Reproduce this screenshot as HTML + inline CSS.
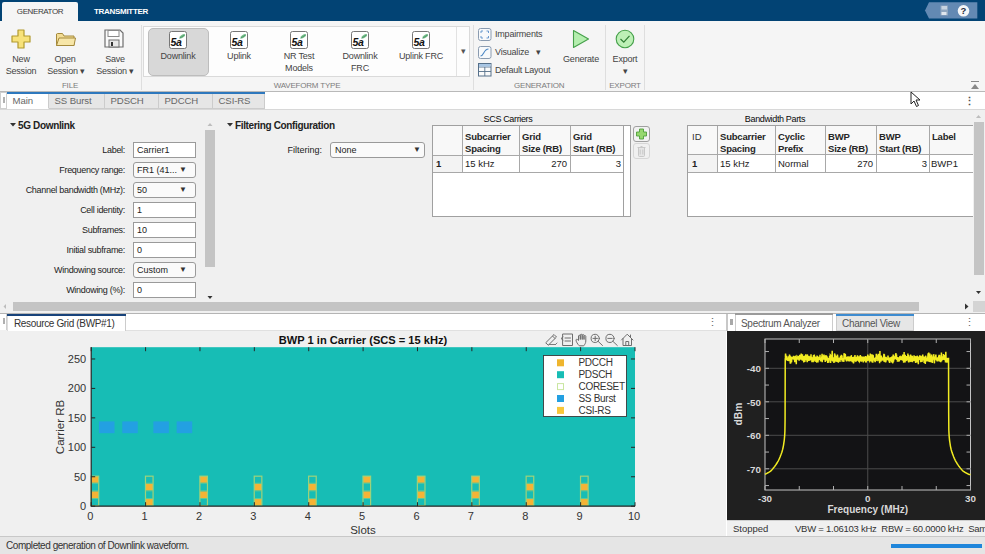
<!DOCTYPE html><html><head><meta charset="utf-8"><style>
html,body{margin:0;padding:0;width:985px;height:554px;overflow:hidden;background:#f0f0f0;position:relative}
body{font-family:"Liberation Sans",sans-serif}
.t{position:absolute;white-space:nowrap;line-height:1;font-family:"Liberation Sans",sans-serif}
</style></head><body>
<div style="position:absolute;left:0px;top:0px;width:985px;height:21px;background:#024374"></div>
<div style="position:absolute;left:2px;top:2px;width:76px;height:20px;background:#f5f5f5;border-radius:2px 2px 0 0"></div>
<div class="t" style="left:2px;top:8px;width:76px;text-align:center;font-size:8px;color:#3a3a3a;letter-spacing:-0.4px">GENERATOR</div>
<div class="t" style="left:80px;top:8px;width:82px;text-align:center;font-size:8px;color:#fff;letter-spacing:-0.3px;font-weight:bold">TRANSMITTER</div>
<svg style="position:absolute;left:920px;top:0px" width="65" height="21"><path d="M5 10.5 L9 2.3 L57.3 2.3 L57.3 18.6 L9 18.6 Z" fill="#6389b3"/><rect x="20.5" y="5.5" width="7.5" height="10" fill="#8fa6bf"/><rect x="21.5" y="6" width="5.5" height="3.5" fill="#c7d3e0"/><rect x="21.5" y="12" width="5" height="3" fill="#dfe6ee"/><circle cx="43.5" cy="10.8" r="5.8" fill="#f4f6f8"/><text x="43.5" y="14.3" font-size="9.5" font-weight="bold" text-anchor="middle" fill="#1d2a3a" font-family="Liberation Sans">?</text></svg>
<div style="position:absolute;left:0px;top:21px;width:985px;height:70px;background:#f5f5f5"></div>
<div style="position:absolute;left:0px;top:91px;width:985px;height:1px;background:#b9b9b9"></div>
<div style="position:absolute;left:141px;top:25px;width:1px;height:65px;background:#dedede"></div>
<div style="position:absolute;left:473px;top:25px;width:1px;height:65px;background:#dedede"></div>
<div style="position:absolute;left:605px;top:25px;width:1px;height:65px;background:#dedede"></div>
<div style="position:absolute;left:644px;top:25px;width:1px;height:65px;background:#dedede"></div>
<svg style="position:absolute;left:11px;top:29px" width="21" height="21"><path d="M7 1 H13 V7 H19 V13 H13 V19 H7 V13 H1 V7 H7 Z" fill="#f7e27a" stroke="#b19a2e" stroke-width="1.2" stroke-linejoin="round"/></svg>
<div class="t" style="left:0px;top:55px;width:42px;text-align:center;font-size:9px;color:#444;letter-spacing:-0.2px">New</div>
<div class="t" style="left:0px;top:67px;width:42px;text-align:center;font-size:9px;color:#444;letter-spacing:-0.2px">Session</div>
<svg style="position:absolute;left:55px;top:31px" width="22" height="17"><path d="M1.5 3 L1.5 14.5 L19 14.5 L19 5 L9 5 L7.5 2.5 L2.5 2.5 Z" fill="#f3dd95" stroke="#a58a3c" stroke-width="1"/><path d="M1.5 14.5 L4 7 L20.5 7 L19 14.5 Z" fill="#f7e6a8" stroke="#a58a3c" stroke-width="1"/></svg>
<div class="t" style="left:44px;top:55px;width:42px;text-align:center;font-size:9px;color:#444;letter-spacing:-0.2px">Open</div>
<div class="t" style="left:45px;top:67px;width:42px;text-align:center;font-size:9px;color:#444;letter-spacing:-0.2px">Session &#9662;</div>
<svg style="position:absolute;left:104px;top:29px" width="20" height="19"><path d="M1 1 H16 L19 4 V18 H1 Z" fill="#fafafa" stroke="#6e6e6e" stroke-width="1.2"/><rect x="4" y="1.5" width="11" height="6" fill="#fff" stroke="#8a8a8a" stroke-width="1"/><rect x="5" y="11" width="10" height="7" fill="#e8e8e8" stroke="#6e6e6e" stroke-width="1"/><rect x="7" y="13" width="2" height="4" fill="#333"/></svg>
<div class="t" style="left:94px;top:55px;width:42px;text-align:center;font-size:9px;color:#444;letter-spacing:-0.2px">Save</div>
<div class="t" style="left:94px;top:67px;width:42px;text-align:center;font-size:9px;color:#444;letter-spacing:-0.2px">Session &#9662;</div>
<div class="t" style="left:50px;top:82px;width:40px;text-align:center;font-size:8px;color:#7c7c7c;letter-spacing:-0.2px">FILE</div>
<div style="position:absolute;left:143px;top:26px;width:327px;height:51px;background:#fdfdfd;border:1px solid #dadada;box-sizing:border-box"></div>
<div style="position:absolute;left:456px;top:27px;width:1px;height:49px;background:#e2e2e2"></div>
<div class="t" style="left:457px;top:47px;width:13px;text-align:center;font-size:9px;color:#555">&#9662;</div>
<div style="position:absolute;left:148px;top:28px;width:61px;height:48px;background:#d8d8d8;border:1px solid #bdbdbd;border-radius:5px;box-sizing:border-box"></div>
<svg style="position:absolute;left:169px;top:31px" width="18" height="18"><rect x="0.5" y="0.5" width="17" height="17" rx="2" fill="#fff" stroke="#777" stroke-width="1"/><text x="1.6" y="14.6" font-size="10.5" font-weight="bold" font-style="italic" fill="#111" letter-spacing="-0.4" font-family="Liberation Sans">5a</text><ellipse cx="13.3" cy="5.3" rx="3.2" ry="1.5" transform="rotate(-30 13.3 5.3)" fill="#7cc08f"/><path d="M10.5 7.3 L15.5 4" stroke="#2e7d4f" stroke-width="0.6"/></svg>
<div class="t" style="left:148px;top:51.5px;width:60px;text-align:center;font-size:9px;color:#444;letter-spacing:-0.2px">Downlink</div>
<svg style="position:absolute;left:230px;top:31px" width="18" height="18"><rect x="0.5" y="0.5" width="17" height="17" rx="2" fill="#fff" stroke="#777" stroke-width="1"/><text x="1.6" y="14.6" font-size="10.5" font-weight="bold" font-style="italic" fill="#111" letter-spacing="-0.4" font-family="Liberation Sans">5a</text><ellipse cx="13.3" cy="5.3" rx="3.2" ry="1.5" transform="rotate(-30 13.3 5.3)" fill="#7cc08f"/><path d="M10.5 7.3 L15.5 4" stroke="#2e7d4f" stroke-width="0.6"/></svg>
<div class="t" style="left:209px;top:51.5px;width:60px;text-align:center;font-size:9px;color:#444;letter-spacing:-0.2px">Uplink</div>
<svg style="position:absolute;left:290px;top:31px" width="18" height="18"><rect x="0.5" y="0.5" width="17" height="17" rx="2" fill="#fff" stroke="#777" stroke-width="1"/><text x="1.6" y="14.6" font-size="10.5" font-weight="bold" font-style="italic" fill="#111" letter-spacing="-0.4" font-family="Liberation Sans">5a</text><ellipse cx="13.3" cy="5.3" rx="3.2" ry="1.5" transform="rotate(-30 13.3 5.3)" fill="#7cc08f"/><path d="M10.5 7.3 L15.5 4" stroke="#2e7d4f" stroke-width="0.6"/></svg>
<div class="t" style="left:269px;top:51.5px;width:60px;text-align:center;font-size:9px;color:#444;letter-spacing:-0.2px">NR Test</div>
<div class="t" style="left:269px;top:63.5px;width:60px;text-align:center;font-size:9px;color:#444;letter-spacing:-0.2px">Models</div>
<svg style="position:absolute;left:351px;top:31px" width="18" height="18"><rect x="0.5" y="0.5" width="17" height="17" rx="2" fill="#fff" stroke="#777" stroke-width="1"/><text x="1.6" y="14.6" font-size="10.5" font-weight="bold" font-style="italic" fill="#111" letter-spacing="-0.4" font-family="Liberation Sans">5a</text><ellipse cx="13.3" cy="5.3" rx="3.2" ry="1.5" transform="rotate(-30 13.3 5.3)" fill="#7cc08f"/><path d="M10.5 7.3 L15.5 4" stroke="#2e7d4f" stroke-width="0.6"/></svg>
<div class="t" style="left:330px;top:51.5px;width:60px;text-align:center;font-size:9px;color:#444;letter-spacing:-0.2px">Downlink</div>
<div class="t" style="left:330px;top:63.5px;width:60px;text-align:center;font-size:9px;color:#444;letter-spacing:-0.2px">FRC</div>
<svg style="position:absolute;left:412px;top:31px" width="18" height="18"><rect x="0.5" y="0.5" width="17" height="17" rx="2" fill="#fff" stroke="#777" stroke-width="1"/><text x="1.6" y="14.6" font-size="10.5" font-weight="bold" font-style="italic" fill="#111" letter-spacing="-0.4" font-family="Liberation Sans">5a</text><ellipse cx="13.3" cy="5.3" rx="3.2" ry="1.5" transform="rotate(-30 13.3 5.3)" fill="#7cc08f"/><path d="M10.5 7.3 L15.5 4" stroke="#2e7d4f" stroke-width="0.6"/></svg>
<div class="t" style="left:391px;top:51.5px;width:60px;text-align:center;font-size:9px;color:#444;letter-spacing:-0.2px">Uplink FRC</div>
<div class="t" style="left:257px;top:82px;width:100px;text-align:center;font-size:8px;color:#7c7c7c;letter-spacing:-0.2px">WAVEFORM TYPE</div>
<svg style="position:absolute;left:478px;top:28px" width="14" height="13"><rect x="0.5" y="0.5" width="12.5" height="12" rx="2" fill="#f7f9fb" stroke="#8a9bb0"/><path d="M3 5 V3 H5 M8.5 3 H10.5 V5 M10.5 8 V10 H8.5 M5 10 H3 V8" fill="none" stroke="#5a8fc8" stroke-width="0.9"/></svg>
<div class="t" style="left:495px;top:30px;font-size:9px;color:#444;letter-spacing:-0.2px">Impairments</div>
<svg style="position:absolute;left:478px;top:46px" width="14" height="13"><rect x="0.5" y="0.5" width="12.5" height="12" rx="2" fill="#f7f9fb" stroke="#8a9bb0"/><path d="M2.5 10 C6 10 5.5 3 10.5 3" fill="none" stroke="#4a86c4" stroke-width="1.1"/></svg>
<div class="t" style="left:495px;top:48px;font-size:9px;color:#444;letter-spacing:-0.2px">Visualize &nbsp;&nbsp;&#9662;</div>
<svg style="position:absolute;left:478px;top:63px" width="14" height="14"><rect x="0.5" y="0.5" width="12.5" height="12.5" fill="#fbfbfb" stroke="#56708a"/><path d="M0.5 4 H13 M6.8 4 V13 M0.5 8.5 H13" stroke="#56708a" stroke-width="0.9"/><rect x="1" y="1" width="11.5" height="2.6" fill="#a8c6e4"/></svg>
<div class="t" style="left:495px;top:66px;font-size:9px;color:#444;letter-spacing:-0.2px">Default Layout</div>
<svg style="position:absolute;left:572px;top:29px" width="18" height="20"><path d="M1.5 1.5 L16.5 10 L1.5 18.5 Z" fill="#b4eeae" stroke="#45a04a" stroke-width="1.1" stroke-linejoin="round"/></svg>
<div class="t" style="left:550px;top:55px;width:62px;text-align:center;font-size:9px;color:#444;letter-spacing:-0.2px">Generate</div>
<div class="t" style="left:514px;top:82px;width:50px;text-align:center;font-size:8px;color:#7c7c7c;letter-spacing:-0.2px">GENERATION</div>
<svg style="position:absolute;left:615px;top:29px" width="20" height="20"><circle cx="10" cy="10" r="8.8" fill="#bdf0b6" stroke="#45a04a" stroke-width="1.1"/><path d="M5.5 10 L8.8 13.2 L14.5 6.8" fill="none" stroke="#2f7d34" stroke-width="1.2"/></svg>
<div class="t" style="left:595px;top:55px;width:60px;text-align:center;font-size:9px;color:#444;letter-spacing:-0.2px">Export</div>
<div class="t" style="left:595px;top:67px;width:60px;text-align:center;font-size:9px;color:#444;letter-spacing:-0.2px">&#9662;</div>
<div class="t" style="left:600px;top:82px;width:50px;text-align:center;font-size:8px;color:#7c7c7c;letter-spacing:-0.2px">EXPORT</div>
<svg style="position:absolute;left:970px;top:80px" width="10" height="10"><rect x="1" y="1" width="8" height="1" fill="#888"/><path d="M1 9 L5 4 L9 9 Z" fill="#888"/></svg>
<div style="position:absolute;left:0px;top:92px;width:985px;height:18px;background:#fff"></div>
<div style="position:absolute;left:0px;top:109px;width:985px;height:1px;background:#d8d8d8"></div>
<div style="position:absolute;left:0px;top:92px;width:7px;height:17px;background:#fff;border:1px solid #cfcfcf;box-sizing:border-box"></div>
<div style="position:absolute;left:3px;top:97px;width:2px;height:6px;background:#b0b0b0"></div>
<div style="position:absolute;left:7px;top:92px;width:42px;height:17px;background:#ffffff;border-right:1px solid #cccccc;border-bottom:1px solid #fff;box-sizing:border-box"></div>
<div style="position:absolute;left:7px;top:92px;width:42px;height:2px;background:#2e78bd"></div>
<div class="t" style="left:12.5px;top:96.2px;font-size:9.6px;color:#666;letter-spacing:-0.1px">Main</div>
<div style="position:absolute;left:49px;top:92px;width:56px;height:17px;background:#e6e6e6;border-right:1px solid #cccccc;border-bottom:1px solid #cccccc;box-sizing:border-box"></div>
<div style="position:absolute;left:49px;top:92px;width:56px;height:2px;background:#2e78bd"></div>
<div class="t" style="left:54.5px;top:96.2px;font-size:9.6px;color:#666;letter-spacing:-0.1px">SS Burst</div>
<div style="position:absolute;left:105px;top:92px;width:54px;height:17px;background:#e6e6e6;border-right:1px solid #cccccc;border-bottom:1px solid #cccccc;box-sizing:border-box"></div>
<div style="position:absolute;left:105px;top:92px;width:54px;height:2px;background:#2e78bd"></div>
<div class="t" style="left:110.5px;top:96.2px;font-size:9.6px;color:#666;letter-spacing:-0.1px">PDSCH</div>
<div style="position:absolute;left:159px;top:92px;width:54px;height:17px;background:#e6e6e6;border-right:1px solid #cccccc;border-bottom:1px solid #cccccc;box-sizing:border-box"></div>
<div style="position:absolute;left:159px;top:92px;width:54px;height:2px;background:#2e78bd"></div>
<div class="t" style="left:164.5px;top:96.2px;font-size:9.6px;color:#666;letter-spacing:-0.1px">PDCCH</div>
<div style="position:absolute;left:213px;top:92px;width:52px;height:17px;background:#e6e6e6;border-right:1px solid #cccccc;border-bottom:1px solid #cccccc;box-sizing:border-box"></div>
<div style="position:absolute;left:213px;top:92px;width:52px;height:2px;background:#2e78bd"></div>
<div class="t" style="left:218.5px;top:96.2px;font-size:9.6px;color:#666;letter-spacing:-0.1px">CSI-RS</div>
<div class="t" style="left:964px;top:96px;font-size:11px;color:#555;font-weight:bold">&#8942;</div>
<svg style="position:absolute;left:910px;top:91px" width="12" height="17"><path d="M1 1 L1 13 L4 10 L6.5 15.5 L8.5 14.5 L6 9 L10 9 Z" fill="#fff" stroke="#222" stroke-width="1"/></svg>
<div style="position:absolute;left:0px;top:110px;width:985px;height:203px;background:#f0f0f0"></div>
<svg style="position:absolute;left:10px;top:123px" width="6" height="4"><path d="M0 0 H6 L3 3.5 Z" fill="#333"/></svg>
<div class="t" style="left:18px;top:120.5px;font-size:10px;font-weight:bold;color:#222;letter-spacing:-0.35px">5G Downlink</div>
<div class="t" style="left:0px;top:146px;width:125px;text-align:right;font-size:9px;color:#222;letter-spacing:-0.3px">Label:</div>
<div style="position:absolute;left:133px;top:142px;width:63px;height:16px;background:#fff;border:1px solid #9a9a9a;box-sizing:border-box"></div>
<div class="t" style="left:137px;top:146px;font-size:9px;color:#222">Carrier1</div>
<div class="t" style="left:0px;top:166px;width:125px;text-align:right;font-size:9px;color:#222;letter-spacing:-0.3px">Frequency range:</div>
<div style="position:absolute;left:133px;top:162px;width:63px;height:16px;background:#fafafa;border:1px solid #9a9a9a;border-radius:3px;box-sizing:border-box"></div>
<div class="t" style="left:179px;top:166px;font-size:8px;color:#333">&#9660;</div>
<div class="t" style="left:137px;top:166px;font-size:9px;color:#222">FR1 (41...</div>
<div class="t" style="left:0px;top:186px;width:125px;text-align:right;font-size:9px;color:#222;letter-spacing:-0.3px">Channel bandwidth (MHz):</div>
<div style="position:absolute;left:133px;top:182px;width:63px;height:16px;background:#fafafa;border:1px solid #9a9a9a;border-radius:3px;box-sizing:border-box"></div>
<div class="t" style="left:179px;top:186px;font-size:8px;color:#333">&#9660;</div>
<div class="t" style="left:137px;top:186px;font-size:9px;color:#222">50</div>
<div class="t" style="left:0px;top:206px;width:125px;text-align:right;font-size:9px;color:#222;letter-spacing:-0.3px">Cell identity:</div>
<div style="position:absolute;left:133px;top:202px;width:63px;height:16px;background:#fff;border:1px solid #9a9a9a;box-sizing:border-box"></div>
<div class="t" style="left:137px;top:206px;font-size:9px;color:#222">1</div>
<div class="t" style="left:0px;top:226px;width:125px;text-align:right;font-size:9px;color:#222;letter-spacing:-0.3px">Subframes:</div>
<div style="position:absolute;left:133px;top:222px;width:63px;height:16px;background:#fff;border:1px solid #9a9a9a;box-sizing:border-box"></div>
<div class="t" style="left:137px;top:226px;font-size:9px;color:#222">10</div>
<div class="t" style="left:0px;top:246px;width:125px;text-align:right;font-size:9px;color:#222;letter-spacing:-0.3px">Initial subframe:</div>
<div style="position:absolute;left:133px;top:242px;width:63px;height:16px;background:#fff;border:1px solid #9a9a9a;box-sizing:border-box"></div>
<div class="t" style="left:137px;top:246px;font-size:9px;color:#222">0</div>
<div class="t" style="left:0px;top:266px;width:125px;text-align:right;font-size:9px;color:#222;letter-spacing:-0.3px">Windowing source:</div>
<div style="position:absolute;left:133px;top:262px;width:63px;height:16px;background:#fafafa;border:1px solid #9a9a9a;border-radius:3px;box-sizing:border-box"></div>
<div class="t" style="left:179px;top:266px;font-size:8px;color:#333">&#9660;</div>
<div class="t" style="left:137px;top:266px;font-size:9px;color:#222">Custom</div>
<div class="t" style="left:0px;top:286px;width:125px;text-align:right;font-size:9px;color:#222;letter-spacing:-0.3px">Windowing (%):</div>
<div style="position:absolute;left:133px;top:282px;width:63px;height:16px;background:#fff;border:1px solid #9a9a9a;box-sizing:border-box"></div>
<div class="t" style="left:137px;top:286px;font-size:9px;color:#222">0</div>
<div style="position:absolute;left:205px;top:118px;width:10px;height:184px;background:#f0f0f0"></div>
<svg style="position:absolute;left:205px;top:120px" width="10" height="8"><path d="M2.5 6 L5 3 L7.5 6 Z" fill="#bdbdbd"/></svg>
<div style="position:absolute;left:205px;top:130px;width:10px;height:137px;background:#c4c4c4"></div>
<svg style="position:absolute;left:205px;top:294px" width="10" height="8"><path d="M2.5 2 L5 5 L7.5 2 Z" fill="#333"/></svg>
<svg style="position:absolute;left:227px;top:123px" width="6" height="4"><path d="M0 0 H6 L3 3.5 Z" fill="#333"/></svg>
<div class="t" style="left:235px;top:120.5px;font-size:10px;font-weight:bold;color:#222;letter-spacing:-0.35px">Filtering Configuration</div>
<div class="t" style="left:230px;top:146px;width:92px;text-align:right;font-size:9px;color:#222">Filtering:</div>
<div style="position:absolute;left:330px;top:142px;width:95px;height:16px;background:#fafafa;border:1px solid #9a9a9a;border-radius:3px;box-sizing:border-box"></div>
<div class="t" style="left:335px;top:146px;font-size:9px;color:#222">None</div>
<div class="t" style="left:413px;top:146px;font-size:8px;color:#333">&#9660;</div>
<div class="t" style="left:458px;top:115px;width:100px;text-align:center;font-size:9px;color:#0a0a0a;letter-spacing:-0.35px">SCS Carriers</div>
<div style="position:absolute;left:432px;top:125px;width:199px;height:92px;background:#fff;border:1px solid #a0a0a0;box-sizing:border-box"></div>
<div style="position:absolute;left:623px;top:125px;width:1px;height:92px;background:#a0a0a0"></div>
<div style="position:absolute;left:433px;top:126px;width:190px;height:30px;background:#f8f8f8"></div>
<div style="position:absolute;left:433px;top:156px;width:29px;height:16px;background:#f3f3f3"></div>
<div style="position:absolute;left:462px;top:126px;width:1px;height:47px;background:#a8a8a8"></div>
<div style="position:absolute;left:519px;top:126px;width:1px;height:47px;background:#a8a8a8"></div>
<div style="position:absolute;left:570px;top:126px;width:1px;height:47px;background:#a8a8a8"></div>
<div style="position:absolute;left:433px;top:155px;width:190px;height:1px;background:#a8a8a8"></div>
<div style="position:absolute;left:433px;top:172px;width:190px;height:1px;background:#a8a8a8"></div>
<div class="t" style="left:465px;top:131px;font-size:9.5px;font-weight:bold;color:#262626;line-height:12px;letter-spacing:-0.2px">Subcarrier<br>Spacing</div>
<div class="t" style="left:522px;top:131px;font-size:9.5px;font-weight:bold;color:#262626;line-height:12px;letter-spacing:-0.2px">Grid<br>Size (RB)</div>
<div class="t" style="left:573px;top:131px;font-size:9.5px;font-weight:bold;color:#262626;line-height:12px;letter-spacing:-0.2px">Grid<br>Start (RB)</div>
<div class="t" style="left:436px;top:159px;font-size:9.5px;font-weight:bold;color:#222">1</div>
<div class="t" style="left:465px;top:159px;font-size:9.5px;color:#222">15 kHz</div>
<div class="t" style="left:519px;top:159px;width:48px;text-align:right;font-size:9.5px;color:#222">270</div>
<div class="t" style="left:570px;top:159px;width:51px;text-align:right;font-size:9.5px;color:#222">3</div>
<svg style="position:absolute;left:633px;top:126px" width="17" height="16"><rect x="0.5" y="0.5" width="16" height="15" rx="2.5" fill="#f2f2f2" stroke="#a0a0a0"/><path d="M6.5 3 H10.5 V6 H13.5 V10 H10.5 V13 H6.5 V10 H3.5 V6 H6.5 Z" fill="#96d86e" stroke="#4f9e3c" stroke-width="0.9" stroke-linejoin="round"/></svg>
<svg style="position:absolute;left:633px;top:143px" width="17" height="16"><rect x="0.5" y="0.5" width="16" height="15" rx="2.5" fill="#f0f0f0" stroke="#d6d6d6"/><path d="M4.5 4.5 H12.5 M5.5 4.5 V12.5 Q5.5 13.5 6.5 13.5 H10.5 Q11.5 13.5 11.5 12.5 V4.5 M7.5 3.5 H9.5 M7.2 6.5 V11.5 M9.8 6.5 V11.5" fill="#e6e6e6" stroke="#c4c4c4" stroke-width="0.9"/></svg>
<div class="t" style="left:688px;top:115px;width:174px;text-align:center;font-size:9px;color:#0a0a0a;letter-spacing:-0.35px">Bandwidth Parts</div>
<div style="position:absolute;left:687px;top:125px;width:290px;height:92px;background:#fff;border:1px solid #a0a0a0;box-sizing:border-box"></div>
<div style="position:absolute;left:688px;top:126px;width:289px;height:29px;background:#f8f8f8"></div>
<div style="position:absolute;left:688px;top:155px;width:29px;height:17px;background:#f3f3f3"></div>
<div style="position:absolute;left:717px;top:126px;width:1px;height:47px;background:#a8a8a8"></div>
<div style="position:absolute;left:775px;top:126px;width:1px;height:47px;background:#a8a8a8"></div>
<div style="position:absolute;left:825px;top:126px;width:1px;height:47px;background:#a8a8a8"></div>
<div style="position:absolute;left:876px;top:126px;width:1px;height:47px;background:#a8a8a8"></div>
<div style="position:absolute;left:929px;top:126px;width:1px;height:47px;background:#a8a8a8"></div>
<div style="position:absolute;left:688px;top:154px;width:289px;height:1px;background:#a8a8a8"></div>
<div style="position:absolute;left:688px;top:172px;width:289px;height:1px;background:#a8a8a8"></div>
<div class="t" style="left:692px;top:131px;font-size:9.5px;color:#333;line-height:12px">ID</div>
<div class="t" style="left:720px;top:131px;font-size:9.5px;font-weight:bold;color:#262626;line-height:12px;letter-spacing:-0.2px">Subcarrier<br>Spacing</div>
<div class="t" style="left:778px;top:131px;font-size:9.5px;font-weight:bold;color:#262626;line-height:12px;letter-spacing:-0.2px">Cyclic<br>Prefix</div>
<div class="t" style="left:828px;top:131px;font-size:9.5px;font-weight:bold;color:#262626;line-height:12px;letter-spacing:-0.2px">BWP<br>Size (RB)</div>
<div class="t" style="left:879px;top:131px;font-size:9.5px;font-weight:bold;color:#262626;line-height:12px;letter-spacing:-0.2px">BWP<br>Start (RB)</div>
<div class="t" style="left:932px;top:131px;font-size:9.5px;font-weight:bold;color:#262626;line-height:12px;letter-spacing:-0.2px">Label</div>
<div class="t" style="left:692px;top:159px;font-size:9.5px;font-weight:bold;color:#222">1</div>
<div class="t" style="left:720px;top:159px;font-size:9.5px;color:#222">15 kHz</div>
<div class="t" style="left:778px;top:159px;font-size:9.5px;color:#222">Normal</div>
<div class="t" style="left:825px;top:159px;width:48px;text-align:right;font-size:9.5px;color:#222">270</div>
<div class="t" style="left:876px;top:159px;width:51px;text-align:right;font-size:9.5px;color:#222">3</div>
<div class="t" style="left:931px;top:159px;font-size:9.5px;color:#222">BWP1</div>
<div style="position:absolute;left:973px;top:110px;width:12px;height:192px;background:#f0f0f0"></div>
<svg style="position:absolute;left:973px;top:112px" width="11" height="8"><path d="M3 6 L5.5 3 L8 6 Z" fill="#bdbdbd"/></svg>
<div style="position:absolute;left:974px;top:122px;width:10px;height:153px;background:#c4c4c4"></div>
<svg style="position:absolute;left:973px;top:289px" width="11" height="8"><path d="M3 2 L5.5 5 L8 2 Z" fill="#333"/></svg>
<div style="position:absolute;left:0px;top:301px;width:985px;height:11px;background:#f0f0f0"></div>
<svg style="position:absolute;left:0px;top:301px" width="10" height="11"><path d="M6 3 L3.5 5.5 L6 8 Z" fill="#bdbdbd"/></svg>
<div style="position:absolute;left:13px;top:302px;width:906px;height:9px;background:#c4c4c4"></div>
<svg style="position:absolute;left:962px;top:301px" width="10" height="11"><path d="M3 2.5 L6.5 5.5 L3 8.5 Z" fill="#333"/></svg>
<div style="position:absolute;left:973px;top:301px;width:12px;height:11px;background:#d4d4d4"></div>
<div style="position:absolute;left:0px;top:313px;width:985px;height:1px;background:#b4b4b4"></div>
<div style="position:absolute;left:0px;top:314px;width:985px;height:16px;background:#fff"></div>
<div style="position:absolute;left:0px;top:314px;width:7px;height:16px;background:#fff;border-right:1px solid #cfcfcf;box-sizing:border-box"></div>
<div style="position:absolute;left:3px;top:318px;width:2px;height:6px;background:#b0b0b0"></div>
<div style="position:absolute;left:7px;top:314px;width:119px;height:17px;background:#fff;border-right:1px solid #ccc;border-left:1px solid #ddd;box-sizing:border-box"></div>
<div style="position:absolute;left:7px;top:314px;width:119px;height:2px;background:#17427a"></div>
<div class="t" style="left:14px;top:319px;font-size:10px;color:#333;letter-spacing:-0.35px">Resource Grid (BWP#1)</div>
<div style="position:absolute;left:126px;top:330px;width:601px;height:1px;background:#e0e0e0"></div>
<div class="t" style="left:707px;top:317px;font-size:11px;color:#666">&#8942;</div>
<div style="position:absolute;left:727px;top:314px;width:258px;height:17px;background:#fff"></div>
<div style="position:absolute;left:726px;top:314px;width:2px;height:17px;background:#c8c8c8"></div>
<div style="position:absolute;left:730px;top:319px;width:3px;height:6px;background:#a8a8a8"></div>
<div style="position:absolute;left:735px;top:314px;width:98px;height:17px;background:#fff;border-right:1px solid #ccc;border-left:1px solid #ccc;box-sizing:border-box"></div>
<div style="position:absolute;left:735px;top:313px;width:98px;height:2px;background:#9a9a9a"></div>
<div class="t" style="left:741px;top:319px;font-size:10px;color:#555;letter-spacing:-0.3px">Spectrum Analyzer</div>
<div style="position:absolute;left:836px;top:315px;width:78px;height:16px;background:#e6e6e6;border:1px solid #ccc;box-sizing:border-box"></div>
<div style="position:absolute;left:836px;top:314px;width:78px;height:2px;background:#3d8bd0"></div>
<div class="t" style="left:842px;top:319px;font-size:10px;color:#555;letter-spacing:-0.3px">Channel View</div>
<div class="t" style="left:964px;top:317px;font-size:11px;color:#666">&#8942;</div>
<div style="position:absolute;left:0px;top:331px;width:727px;height:205px;background:#f0f0f0"></div>
<svg style="position:absolute;left:0;top:0" width="727" height="554">
<rect x="91.2" y="347.2" width="543.8" height="159.0" fill="#17bdb5"/>
<rect x="98.97" y="421.40" width="15.54" height="11.78" fill="#23a0e2"/>
<rect x="122.27" y="421.40" width="15.54" height="11.78" fill="#23a0e2"/>
<rect x="153.35" y="421.40" width="15.54" height="11.78" fill="#23a0e2"/>
<rect x="176.65" y="421.40" width="15.54" height="11.78" fill="#23a0e2"/>
<rect x="91.20" y="476.08" width="7.40" height="6.66" fill="#f5b335"/>
<rect x="91.20" y="491.39" width="7.40" height="6.66" fill="#f5b335"/>
<rect x="91.10" y="476.18" width="7.60" height="29.42" fill="none" stroke="#9fd27a" stroke-width="1.2"/>
<path d="M91.10 483.23 h7.60" stroke="#7fcf8a" stroke-width="0.7"/>
<path d="M91.10 490.89 h7.60" stroke="#7fcf8a" stroke-width="0.7"/>
<path d="M91.10 498.54 h7.60" stroke="#7fcf8a" stroke-width="0.7"/>
<rect x="145.58" y="483.73" width="7.40" height="6.66" fill="#f5b335"/>
<rect x="145.58" y="499.04" width="7.40" height="6.66" fill="#f5b335"/>
<rect x="145.48" y="476.18" width="7.60" height="29.42" fill="none" stroke="#9fd27a" stroke-width="1.2"/>
<path d="M145.48 483.23 h7.60" stroke="#7fcf8a" stroke-width="0.7"/>
<path d="M145.48 490.89 h7.60" stroke="#7fcf8a" stroke-width="0.7"/>
<path d="M145.48 498.54 h7.60" stroke="#7fcf8a" stroke-width="0.7"/>
<rect x="199.96" y="476.08" width="7.40" height="6.66" fill="#f5b335"/>
<rect x="199.96" y="491.39" width="7.40" height="6.66" fill="#f5b335"/>
<rect x="199.86" y="476.18" width="7.60" height="29.42" fill="none" stroke="#9fd27a" stroke-width="1.2"/>
<path d="M199.86 483.23 h7.60" stroke="#7fcf8a" stroke-width="0.7"/>
<path d="M199.86 490.89 h7.60" stroke="#7fcf8a" stroke-width="0.7"/>
<path d="M199.86 498.54 h7.60" stroke="#7fcf8a" stroke-width="0.7"/>
<rect x="254.34" y="483.73" width="7.40" height="6.66" fill="#f5b335"/>
<rect x="254.34" y="499.04" width="7.40" height="6.66" fill="#f5b335"/>
<rect x="254.24" y="476.18" width="7.60" height="29.42" fill="none" stroke="#9fd27a" stroke-width="1.2"/>
<path d="M254.24 483.23 h7.60" stroke="#7fcf8a" stroke-width="0.7"/>
<path d="M254.24 490.89 h7.60" stroke="#7fcf8a" stroke-width="0.7"/>
<path d="M254.24 498.54 h7.60" stroke="#7fcf8a" stroke-width="0.7"/>
<rect x="308.72" y="483.73" width="7.40" height="6.66" fill="#f5b335"/>
<rect x="308.72" y="499.04" width="7.40" height="6.66" fill="#f5b335"/>
<rect x="308.62" y="476.18" width="7.60" height="29.42" fill="none" stroke="#9fd27a" stroke-width="1.2"/>
<path d="M308.62 483.23 h7.60" stroke="#7fcf8a" stroke-width="0.7"/>
<path d="M308.62 490.89 h7.60" stroke="#7fcf8a" stroke-width="0.7"/>
<path d="M308.62 498.54 h7.60" stroke="#7fcf8a" stroke-width="0.7"/>
<rect x="363.10" y="476.08" width="7.40" height="6.66" fill="#f5b335"/>
<rect x="363.10" y="491.39" width="7.40" height="6.66" fill="#f5b335"/>
<rect x="363.00" y="476.18" width="7.60" height="29.42" fill="none" stroke="#9fd27a" stroke-width="1.2"/>
<path d="M363.00 483.23 h7.60" stroke="#7fcf8a" stroke-width="0.7"/>
<path d="M363.00 490.89 h7.60" stroke="#7fcf8a" stroke-width="0.7"/>
<path d="M363.00 498.54 h7.60" stroke="#7fcf8a" stroke-width="0.7"/>
<rect x="417.48" y="476.08" width="7.40" height="6.66" fill="#f5b335"/>
<rect x="417.48" y="491.39" width="7.40" height="6.66" fill="#f5b335"/>
<rect x="417.38" y="476.18" width="7.60" height="29.42" fill="none" stroke="#9fd27a" stroke-width="1.2"/>
<path d="M417.38 483.23 h7.60" stroke="#7fcf8a" stroke-width="0.7"/>
<path d="M417.38 490.89 h7.60" stroke="#7fcf8a" stroke-width="0.7"/>
<path d="M417.38 498.54 h7.60" stroke="#7fcf8a" stroke-width="0.7"/>
<rect x="471.86" y="476.08" width="7.40" height="6.66" fill="#f5b335"/>
<rect x="471.86" y="491.39" width="7.40" height="6.66" fill="#f5b335"/>
<rect x="471.76" y="476.18" width="7.60" height="29.42" fill="none" stroke="#9fd27a" stroke-width="1.2"/>
<path d="M471.76 483.23 h7.60" stroke="#7fcf8a" stroke-width="0.7"/>
<path d="M471.76 490.89 h7.60" stroke="#7fcf8a" stroke-width="0.7"/>
<path d="M471.76 498.54 h7.60" stroke="#7fcf8a" stroke-width="0.7"/>
<rect x="526.24" y="483.73" width="7.40" height="6.66" fill="#f5b335"/>
<rect x="526.24" y="499.04" width="7.40" height="6.66" fill="#f5b335"/>
<rect x="526.14" y="476.18" width="7.60" height="29.42" fill="none" stroke="#9fd27a" stroke-width="1.2"/>
<path d="M526.14 483.23 h7.60" stroke="#7fcf8a" stroke-width="0.7"/>
<path d="M526.14 490.89 h7.60" stroke="#7fcf8a" stroke-width="0.7"/>
<path d="M526.14 498.54 h7.60" stroke="#7fcf8a" stroke-width="0.7"/>
<rect x="580.62" y="483.73" width="7.40" height="6.66" fill="#f5b335"/>
<rect x="580.62" y="499.04" width="7.40" height="6.66" fill="#f5b335"/>
<rect x="580.52" y="476.18" width="7.60" height="29.42" fill="none" stroke="#9fd27a" stroke-width="1.2"/>
<path d="M580.52 483.23 h7.60" stroke="#7fcf8a" stroke-width="0.7"/>
<path d="M580.52 490.89 h7.60" stroke="#7fcf8a" stroke-width="0.7"/>
<path d="M580.52 498.54 h7.60" stroke="#7fcf8a" stroke-width="0.7"/>
<path d="M91.2 347.2 V506.2 H635.0" fill="none" stroke="#262626" stroke-width="1.2"/>
<path d="M91.20 506.2 v-4 M91.20 347.2 v4 M145.58 506.2 v-4 M145.58 347.2 v4 M199.96 506.2 v-4 M199.96 347.2 v4 M254.34 506.2 v-4 M254.34 347.2 v4 M308.72 506.2 v-4 M308.72 347.2 v4 M363.10 506.2 v-4 M363.10 347.2 v4 M417.48 506.2 v-4 M417.48 347.2 v4 M471.86 506.2 v-4 M471.86 347.2 v4 M526.24 506.2 v-4 M526.24 347.2 v4 M580.62 506.2 v-4 M580.62 347.2 v4 M635.00 506.2 v-4 M635.00 347.2 v4 M91.2 506.20 h4 M635.0 506.20 h-4 M91.2 476.76 h4 M635.0 476.76 h-4 M91.2 447.31 h4 M635.0 447.31 h-4 M91.2 417.87 h4 M635.0 417.87 h-4 M91.2 388.42 h4 M635.0 388.42 h-4 M91.2 358.98 h4 M635.0 358.98 h-4" stroke="#262626" stroke-width="1"/>
<text x="90.20" y="520.2" font-size="11" text-anchor="middle" fill="#333" font-family="Liberation Sans">0</text>
<text x="144.58" y="520.2" font-size="11" text-anchor="middle" fill="#333" font-family="Liberation Sans">1</text>
<text x="198.96" y="520.2" font-size="11" text-anchor="middle" fill="#333" font-family="Liberation Sans">2</text>
<text x="253.34" y="520.2" font-size="11" text-anchor="middle" fill="#333" font-family="Liberation Sans">3</text>
<text x="307.72" y="520.2" font-size="11" text-anchor="middle" fill="#333" font-family="Liberation Sans">4</text>
<text x="362.10" y="520.2" font-size="11" text-anchor="middle" fill="#333" font-family="Liberation Sans">5</text>
<text x="416.48" y="520.2" font-size="11" text-anchor="middle" fill="#333" font-family="Liberation Sans">6</text>
<text x="470.86" y="520.2" font-size="11" text-anchor="middle" fill="#333" font-family="Liberation Sans">7</text>
<text x="525.24" y="520.2" font-size="11" text-anchor="middle" fill="#333" font-family="Liberation Sans">8</text>
<text x="579.62" y="520.2" font-size="11" text-anchor="middle" fill="#333" font-family="Liberation Sans">9</text>
<text x="634.00" y="520.2" font-size="11" text-anchor="middle" fill="#333" font-family="Liberation Sans">10</text>
<text x="86.2" y="510.20" font-size="11" text-anchor="end" fill="#333" font-family="Liberation Sans">0</text>
<text x="86.2" y="480.76" font-size="11" text-anchor="end" fill="#333" font-family="Liberation Sans">50</text>
<text x="86.2" y="451.31" font-size="11" text-anchor="end" fill="#333" font-family="Liberation Sans">100</text>
<text x="86.2" y="421.87" font-size="11" text-anchor="end" fill="#333" font-family="Liberation Sans">150</text>
<text x="86.2" y="392.42" font-size="11" text-anchor="end" fill="#333" font-family="Liberation Sans">200</text>
<text x="86.2" y="362.98" font-size="11" text-anchor="end" fill="#333" font-family="Liberation Sans">250</text>
<text x="363" y="534" font-size="11.5" text-anchor="middle" fill="#333" font-family="Liberation Sans">Slots</text>
<text transform="translate(64 427) rotate(-90)" font-size="11.5" text-anchor="middle" fill="#333" font-family="Liberation Sans">Carrier RB</text>
<text x="363" y="343.5" font-size="11.1" font-weight="bold" text-anchor="middle" fill="#111" font-family="Liberation Sans">BWP 1 in Carrier (SCS = 15 kHz)</text>
<rect x="543.5" y="355.5" width="83" height="61" fill="#fff" stroke="#3a3a3a" stroke-width="0.9"/>
<rect x="557" y="359.30" width="7" height="7" fill="#efb52e"/>
<text x="578.5" y="366.40" font-size="10" fill="#333" letter-spacing="-0.3" font-family="Liberation Sans">PDCCH</text>
<rect x="557" y="371.20" width="7" height="7" fill="#17bdb5"/>
<text x="578.5" y="378.30" font-size="10" fill="#333" letter-spacing="-0.3" font-family="Liberation Sans">PDSCH</text>
<rect x="557.5" y="383.60" width="6" height="6" fill="none" stroke="#c9e6a0" stroke-width="1"/>
<text x="578.5" y="390.20" font-size="10" fill="#333" letter-spacing="-0.3" font-family="Liberation Sans">CORESET</text>
<rect x="557" y="395.00" width="7" height="7" fill="#23a0e2"/>
<text x="578.5" y="402.10" font-size="10" fill="#333" letter-spacing="-0.3" font-family="Liberation Sans">SS Burst</text>
<rect x="557" y="406.90" width="7" height="7" fill="#f8c73a"/>
<text x="578.5" y="414.00" font-size="10" fill="#333" letter-spacing="-0.3" font-family="Liberation Sans">CSI-RS</text>
<g fill="none" stroke="#6e6e6e" stroke-width="1" stroke-linejoin="round" stroke-linecap="round"><path d="M546 342.5 L552.5 336 L555 338.5 L548.5 345 Z M552.5 336 L554 334.5 L556.5 337 L555 338.5"/><path d="M549 344.5 H555.5 M555.5 344.5 L557 343" stroke-width="0.9"/><rect x="563" y="334" width="9.5" height="11.5"/><path d="M563 337 L561 338.5 L563 340 M565 338 H570.5 M565 341 H570.5"/><path d="M579 345.5 C577.5 344 576 341.5 576 340 C576 339 577.5 339 578.5 340.5 V336 C578.5 335 580.3 335 580.3 336 V339.5 V335 C580.3 334 582.2 334 582.2 335 V339.5 V335.3 C582.2 334.3 584 334.3 584 335.3 V339.5 V336.3 C584 335.3 585.8 335.3 585.8 336.3 V341 C585.8 343 584.8 344.5 584 345.5 Z"/><circle cx="595.2" cy="338.4" r="4.1"/><path d="M598.2 341.4 L602.5 345.5 M593 338.4 H597.4 M595.2 336.2 V340.6"/><circle cx="610" cy="338.4" r="4.1"/><path d="M613 341.4 L617.3 345.5 M607.8 338.4 H612.2"/><path d="M621.5 340 L627.2 334.2 L633 340 M623 338.5 V345.5 H631.5 V338.5 M625.8 345.5 V341.5 H628.7 V345.5 M630.5 335 V337"/></g>
</svg>
<div style="position:absolute;left:726px;top:331px;width:1px;height:205px;background:#fff"></div>
<div style="position:absolute;left:727px;top:331px;width:258px;height:189px;background:#202020"></div>
<svg style="position:absolute;left:0;top:0" width="985" height="554">
<rect x="765.0" y="339.0" width="205.5" height="151.0" fill="#131315" stroke="#c4c4c4" stroke-width="1"/>
<path d="M765.0 368.30 H970.5 M765.0 401.80 H970.5 M765.0 435.30 H970.5 M765.0 468.80 H970.5 M867.75 339.0 V490.0" stroke="#4c4c4c" stroke-width="1"/>
<path d="M765.00 490.0 v-4 M765.00 339.0 v4 M799.25 490.0 v-4 M799.25 339.0 v4 M833.50 490.0 v-4 M833.50 339.0 v4 M867.75 490.0 v-4 M867.75 339.0 v4 M902.00 490.0 v-4 M902.00 339.0 v4 M936.25 490.0 v-4 M936.25 339.0 v4 M970.50 490.0 v-4 M970.50 339.0 v4 M765.0 351.55 h4 M970.5 351.55 h-4 M765.0 368.30 h4 M970.5 368.30 h-4 M765.0 385.05 h4 M970.5 385.05 h-4 M765.0 401.80 h4 M970.5 401.80 h-4 M765.0 418.55 h4 M970.5 418.55 h-4 M765.0 435.30 h4 M970.5 435.30 h-4 M765.0 452.05 h4 M970.5 452.05 h-4 M765.0 468.80 h4 M970.5 468.80 h-4 M765.0 485.55 h4 M970.5 485.55 h-4" stroke="#b0b0b0" stroke-width="1"/>
<text x="761.0" y="372.10" font-size="9.8" font-weight="bold" text-anchor="end" fill="#d8d8d8" font-family="Liberation Sans">-40</text>
<text x="761.0" y="405.60" font-size="9.8" font-weight="bold" text-anchor="end" fill="#d8d8d8" font-family="Liberation Sans">-50</text>
<text x="761.0" y="439.10" font-size="9.8" font-weight="bold" text-anchor="end" fill="#d8d8d8" font-family="Liberation Sans">-60</text>
<text x="761.0" y="472.60" font-size="9.8" font-weight="bold" text-anchor="end" fill="#d8d8d8" font-family="Liberation Sans">-70</text>
<text x="765.00" y="501.5" font-size="9.8" font-weight="bold" text-anchor="middle" fill="#d8d8d8" font-family="Liberation Sans">-30</text>
<text x="867.75" y="501.5" font-size="9.8" font-weight="bold" text-anchor="middle" fill="#d8d8d8" font-family="Liberation Sans">0</text>
<text x="970.50" y="501.5" font-size="9.8" font-weight="bold" text-anchor="middle" fill="#d8d8d8" font-family="Liberation Sans">30</text>
<text x="867.75" y="513" font-size="10" font-weight="bold" text-anchor="middle" fill="#d8d8d8" font-family="Liberation Sans">Frequency (MHz)</text>
<text transform="translate(742 414) rotate(-90)" font-size="10.3" font-weight="bold" text-anchor="middle" fill="#d8d8d8" font-family="Liberation Sans">dBm</text>
<polyline points="765.00,474.33 765.16,474.26 765.32,474.18 765.47,474.10 765.63,474.02 765.79,473.94 765.95,473.86 766.11,473.78 766.26,473.70 766.42,473.62 766.58,473.54 766.74,473.46 766.90,473.37 767.05,473.29 767.21,473.20 767.37,473.12 767.53,473.03 767.69,472.95 767.85,472.86 768.00,472.77 768.16,472.68 768.32,472.59 768.48,472.50 768.64,472.40 768.79,472.31 768.95,472.22 769.11,472.12 769.27,472.03 769.43,471.93 769.58,471.83 769.74,471.73 769.90,471.63 770.06,471.53 770.22,471.43 770.37,471.33 770.53,471.22 770.69,471.10 770.85,470.94 771.01,470.77 771.16,470.61 771.32,470.44 771.48,470.26 771.64,470.09 771.80,469.91 771.96,469.74 772.11,469.56 772.27,469.37 772.43,469.19 772.59,469.00 772.75,468.81 772.90,468.62 773.06,468.43 773.22,468.23 773.38,468.03 773.54,467.83 773.69,467.64 773.85,467.45 774.01,467.26 774.17,467.06 774.33,466.86 774.48,466.66 774.64,466.46 774.80,466.25 774.96,466.04 775.12,465.83 775.27,465.61 775.43,465.39 775.59,465.17 775.75,464.94 775.91,464.71 776.07,464.47 776.22,464.23 776.38,463.99 776.54,463.76 776.70,463.52 776.86,463.27 777.01,463.02 777.17,462.77 777.33,462.51 777.49,462.24 777.65,461.97 777.80,461.70 777.96,461.41 778.12,461.13 778.28,460.83 778.44,460.53 778.59,460.22 778.75,459.91 778.91,459.58 779.07,459.25 779.23,458.91 779.38,458.56 779.54,458.20 779.70,457.83 779.86,457.45 780.02,457.06 780.18,456.66 780.33,456.24 780.49,455.81 780.65,455.37 780.81,454.94 780.97,454.57 781.12,454.17 781.28,453.77 781.44,453.35 781.60,452.90 781.76,452.44 781.91,451.96 782.07,451.46 782.23,450.93 782.39,450.37 782.55,449.77 782.70,449.15 782.86,448.48 783.02,447.76 783.18,447.00 783.34,446.17 783.50,445.27 783.65,444.29 783.81,443.20 783.97,442.18 784.13,441.07 784.29,439.79 784.44,438.28 784.60,436.43 784.76,434.06 784.92,430.74 785.08,419.16 785.23,359.18 785.39,357.90 785.55,353.62 785.71,354.80 785.87,357.90 786.02,357.92 786.18,358.24 786.34,358.83 786.50,359.86 786.66,355.88 786.81,356.89 786.97,358.93 787.13,360.33 787.29,359.69 787.45,360.58 787.61,359.67 787.76,357.47 787.92,361.04 788.08,358.55 788.24,360.93 788.40,360.37 788.55,359.64 788.71,356.33 788.87,357.78 789.03,357.25 789.19,360.85 789.34,357.88 789.50,354.50 789.66,356.45 789.82,360.82 789.98,355.61 790.13,361.55 790.29,363.77 790.45,358.54 790.61,356.30 790.77,363.58 790.92,358.11 791.08,362.10 791.24,356.71 791.40,360.88 791.56,362.32 791.72,358.12 791.87,358.77 792.03,357.21 792.19,358.58 792.35,358.34 792.51,358.56 792.66,358.45 792.82,356.73 792.98,358.41 793.14,359.43 793.30,358.00 793.45,358.24 793.61,355.74 793.77,358.83 793.93,358.17 794.09,358.90 794.24,356.18 794.40,357.22 794.56,359.20 794.72,361.31 794.88,361.28 795.03,356.63 795.19,357.50 795.35,357.47 795.51,356.09 795.67,362.06 795.83,356.40 795.98,356.24 796.14,360.46 796.30,364.28 796.46,357.05 796.62,357.12 796.77,359.48 796.93,359.08 797.09,357.55 797.25,357.43 797.41,359.59 797.56,357.03 797.72,356.43 797.88,355.75 798.04,358.68 798.20,359.68 798.35,356.95 798.51,358.74 798.67,357.40 798.83,357.21 798.99,359.70 799.14,360.73 799.30,358.14 799.46,357.54 799.62,359.21 799.78,354.88 799.93,357.50 800.09,357.98 800.25,359.34 800.41,357.60 800.57,358.99 800.73,358.26 800.88,359.62 801.04,356.15 801.20,353.42 801.36,359.36 801.52,358.80 801.67,358.80 801.83,358.28 801.99,356.12 802.15,360.39 802.31,354.76 802.46,354.31 802.62,358.53 802.78,359.42 802.94,359.88 803.10,356.95 803.25,360.91 803.41,357.95 803.57,358.67 803.73,362.48 803.89,356.04 804.04,358.49 804.20,356.32 804.36,356.83 804.52,361.31 804.68,358.86 804.84,361.90 804.99,355.63 805.15,358.39 805.31,358.15 805.47,358.68 805.63,357.36 805.78,354.39 805.94,359.82 806.10,358.80 806.26,358.69 806.42,358.92 806.57,360.49 806.73,359.16 806.89,357.60 807.05,359.48 807.21,362.12 807.36,354.39 807.52,361.13 807.68,358.40 807.84,359.60 808.00,357.73 808.15,360.72 808.31,357.87 808.47,358.58 808.63,360.38 808.79,355.83 808.95,360.83 809.10,358.79 809.26,357.58 809.42,358.16 809.58,360.40 809.74,358.69 809.89,359.17 810.05,359.28 810.21,356.33 810.37,358.86 810.53,359.27 810.68,356.80 810.84,360.21 811.00,354.35 811.16,360.01 811.32,358.34 811.47,357.47 811.63,357.17 811.79,356.77 811.95,362.14 812.11,360.58 812.26,358.66 812.42,358.70 812.58,358.84 812.74,359.58 812.90,362.26 813.06,360.09 813.21,357.54 813.37,359.62 813.53,354.93 813.69,361.68 813.85,355.76 814.00,360.42 814.16,359.52 814.32,354.51 814.48,359.84 814.64,359.56 814.79,356.13 814.95,360.32 815.11,359.34 815.27,359.93 815.43,358.73 815.58,358.49 815.74,358.07 815.90,361.92 816.06,360.23 816.22,357.14 816.38,357.69 816.53,361.04 816.69,361.18 816.85,362.67 817.01,355.57 817.17,359.97 817.32,359.91 817.48,355.99 817.64,362.29 817.80,360.40 817.96,362.39 818.11,359.20 818.27,358.90 818.43,359.04 818.59,357.93 818.75,356.91 818.90,357.88 819.06,357.34 819.22,358.66 819.38,359.96 819.54,358.56 819.69,356.80 819.85,358.48 820.01,354.76 820.17,359.30 820.33,357.95 820.49,361.38 820.64,358.24 820.80,359.85 820.96,359.83 821.12,358.72 821.28,357.74 821.43,359.26 821.59,361.56 821.75,356.53 821.91,359.26 822.07,353.69 822.22,362.23 822.38,357.68 822.54,355.67 822.70,355.72 822.86,359.24 823.01,358.53 823.17,357.91 823.33,357.83 823.49,355.27 823.65,357.31 823.80,359.34 823.96,354.58 824.12,358.78 824.28,358.61 824.44,357.54 824.60,358.57 824.75,358.76 824.91,356.98 825.07,358.98 825.23,361.86 825.39,358.24 825.54,356.52 825.70,356.68 825.86,358.30 826.02,355.31 826.18,358.05 826.33,360.77 826.49,357.59 826.65,356.43 826.81,356.54 826.97,358.36 827.12,357.55 827.28,359.53 827.44,357.26 827.60,361.69 827.76,362.97 827.91,358.34 828.07,359.00 828.23,362.10 828.39,360.68 828.55,358.05 828.71,362.73 828.86,359.38 829.02,358.07 829.18,358.68 829.34,358.51 829.50,357.89 829.65,355.90 829.81,358.75 829.97,359.49 830.13,360.22 830.29,354.88 830.44,355.04 830.60,363.01 830.76,355.15 830.92,358.62 831.08,356.01 831.23,358.51 831.39,359.91 831.55,359.87 831.71,358.04 831.87,359.12 832.02,355.95 832.18,350.80 832.34,356.83 832.50,360.07 832.66,361.43 832.82,356.92 832.97,360.39 833.13,358.94 833.29,360.59 833.45,358.20 833.61,360.99 833.76,359.48 833.92,363.07 834.08,360.28 834.24,358.50 834.40,361.66 834.55,354.22 834.71,353.45 834.87,362.08 835.03,361.64 835.19,356.59 835.34,356.26 835.50,356.82 835.66,358.98 835.82,358.19 835.98,359.01 836.13,359.23 836.29,355.71 836.45,361.08 836.61,356.77 836.77,360.27 836.92,361.97 837.08,359.79 837.24,359.95 837.40,354.58 837.56,355.53 837.72,356.56 837.87,358.88 838.03,358.77 838.19,359.28 838.35,362.64 838.51,360.02 838.66,360.58 838.82,357.92 838.98,358.63 839.14,358.74 839.30,360.69 839.45,359.87 839.61,357.60 839.77,359.24 839.93,361.82 840.09,360.42 840.24,359.86 840.40,360.19 840.56,356.77 840.72,356.80 840.88,357.89 841.03,359.09 841.19,358.35 841.35,354.76 841.51,358.79 841.67,358.94 841.83,359.90 841.98,355.49 842.14,359.85 842.30,361.80 842.46,358.26 842.62,360.73 842.77,358.54 842.93,358.95 843.09,358.79 843.25,360.24 843.41,360.51 843.56,360.64 843.72,359.82 843.88,361.88 844.04,353.17 844.20,354.41 844.35,357.44 844.51,357.99 844.67,358.80 844.83,359.37 844.99,358.27 845.14,359.14 845.30,353.73 845.46,357.97 845.62,357.65 845.78,359.77 845.94,359.06 846.09,358.59 846.25,360.61 846.41,357.64 846.57,361.41 846.73,357.63 846.88,358.28 847.04,356.89 847.20,358.60 847.36,358.77 847.52,360.30 847.67,358.70 847.83,358.18 847.99,356.22 848.15,358.14 848.31,361.27 848.46,358.81 848.62,356.59 848.78,360.39 848.94,358.76 849.10,358.67 849.25,361.55 849.41,357.39 849.57,360.81 849.73,359.52 849.89,359.17 850.05,359.58 850.20,356.28 850.36,359.69 850.52,356.95 850.68,358.86 850.84,359.52 850.99,357.99 851.15,361.37 851.31,355.16 851.47,357.15 851.63,360.01 851.78,360.13 851.94,357.26 852.10,359.72 852.26,359.35 852.42,362.15 852.57,359.91 852.73,356.96 852.89,359.29 853.05,361.05 853.21,360.87 853.37,357.40 853.52,363.37 853.68,357.50 853.84,356.86 854.00,359.49 854.16,361.14 854.31,358.94 854.47,358.12 854.63,356.29 854.79,359.10 854.95,355.08 855.10,359.25 855.26,360.23 855.42,359.91 855.58,358.95 855.74,358.24 855.89,361.76 856.05,357.23 856.21,359.10 856.37,359.33 856.53,356.72 856.68,358.93 856.84,360.74 857.00,359.00 857.16,357.52 857.32,359.61 857.48,355.36 857.63,358.56 857.79,357.94 857.95,359.46 858.11,359.81 858.27,359.30 858.42,357.96 858.58,361.02 858.74,360.59 858.90,357.92 859.06,356.32 859.21,359.99 859.37,362.12 859.53,357.55 859.69,361.15 859.85,360.86 860.00,358.32 860.16,358.11 860.32,354.99 860.48,357.39 860.64,359.38 860.79,356.15 860.95,358.19 861.11,360.77 861.27,358.43 861.43,361.71 861.59,359.80 861.74,359.02 861.90,356.78 862.06,359.33 862.22,361.08 862.38,356.57 862.53,360.14 862.69,360.37 862.85,361.23 863.01,359.50 863.17,360.88 863.32,362.44 863.48,359.52 863.64,360.87 863.80,356.47 863.96,360.05 864.11,361.26 864.27,357.94 864.43,358.55 864.59,357.10 864.75,358.61 864.90,359.41 865.06,360.03 865.22,359.10 865.38,359.53 865.54,356.10 865.69,362.20 865.85,359.50 866.01,361.96 866.17,362.52 866.33,359.51 866.49,357.74 866.64,361.26 866.80,359.34 866.96,358.70 867.12,356.92 867.28,356.39 867.43,360.97 867.59,356.82 867.75,354.55 867.91,357.07 868.07,355.62 868.22,359.20 868.38,360.57 868.54,356.97 868.70,357.44 868.86,358.74 869.01,355.69 869.17,357.92 869.33,356.95 869.49,361.20 869.65,361.58 869.81,359.74 869.96,360.73 870.12,360.32 870.28,353.62 870.44,360.55 870.60,355.97 870.75,360.85 870.91,358.38 871.07,357.76 871.23,354.35 871.39,358.86 871.54,358.53 871.70,361.47 871.86,355.40 872.02,358.95 872.18,362.38 872.33,356.93 872.49,357.66 872.65,354.76 872.81,362.68 872.97,357.70 873.12,355.66 873.28,355.85 873.44,359.56 873.60,360.22 873.76,358.67 873.91,358.29 874.07,358.48 874.23,359.20 874.39,357.87 874.55,358.43 874.71,361.12 874.86,360.29 875.02,359.76 875.18,362.23 875.34,358.60 875.50,358.33 875.65,358.05 875.81,359.34 875.97,360.02 876.13,360.08 876.29,353.71 876.44,357.83 876.60,358.93 876.76,357.04 876.92,357.79 877.08,357.06 877.23,355.42 877.39,357.51 877.55,358.81 877.71,357.63 877.87,361.24 878.02,357.96 878.18,355.73 878.34,353.71 878.50,358.05 878.66,357.11 878.82,357.53 878.97,354.15 879.13,360.09 879.29,358.71 879.45,355.35 879.61,363.16 879.76,360.39 879.92,350.96 880.08,357.84 880.24,359.70 880.40,356.72 880.55,357.12 880.71,359.43 880.87,361.76 881.03,358.75 881.19,359.35 881.34,355.55 881.50,359.15 881.66,356.73 881.82,358.95 881.98,360.56 882.13,359.69 882.29,357.93 882.45,358.51 882.61,359.51 882.77,358.24 882.93,358.77 883.08,359.76 883.24,357.66 883.40,360.48 883.56,358.66 883.72,357.24 883.87,353.88 884.03,361.73 884.19,360.85 884.35,354.37 884.51,357.84 884.66,358.63 884.82,360.88 884.98,361.99 885.14,359.06 885.30,356.68 885.45,362.51 885.61,357.09 885.77,362.23 885.93,361.09 886.09,358.24 886.25,358.06 886.40,358.72 886.56,358.03 886.72,359.41 886.88,359.66 887.04,360.17 887.19,358.47 887.35,358.97 887.51,358.89 887.67,360.12 887.83,358.68 887.98,355.66 888.14,357.37 888.30,358.83 888.46,359.55 888.62,359.56 888.77,357.42 888.93,361.48 889.09,359.06 889.25,359.71 889.41,357.85 889.56,363.05 889.72,358.70 889.88,360.03 890.04,359.77 890.20,360.40 890.36,357.40 890.51,360.57 890.67,358.75 890.83,359.38 890.99,359.10 891.15,357.66 891.30,357.19 891.46,362.52 891.62,358.69 891.78,361.28 891.94,359.03 892.09,356.37 892.25,359.56 892.41,360.78 892.57,359.58 892.73,362.71 892.88,362.69 893.04,360.68 893.20,354.53 893.36,359.90 893.52,361.64 893.67,359.25 893.83,356.81 893.99,360.00 894.15,356.51 894.31,356.85 894.47,356.35 894.62,358.11 894.78,356.90 894.94,356.56 895.10,358.79 895.26,358.15 895.41,358.27 895.57,354.03 895.73,359.31 895.89,353.11 896.05,357.60 896.20,359.18 896.36,358.38 896.52,354.57 896.68,359.62 896.84,358.18 896.99,360.06 897.15,358.68 897.31,357.09 897.47,361.71 897.63,358.46 897.78,357.39 897.94,359.00 898.10,359.26 898.26,358.40 898.42,361.71 898.58,357.48 898.73,358.95 898.89,359.46 899.05,357.19 899.21,361.35 899.37,357.65 899.52,359.05 899.68,356.97 899.84,356.83 900.00,358.70 900.16,356.46 900.31,360.04 900.47,359.10 900.63,357.05 900.79,357.21 900.95,357.09 901.10,357.39 901.26,359.20 901.42,357.64 901.58,356.32 901.74,360.32 901.89,356.27 902.05,358.29 902.21,359.15 902.37,359.95 902.53,355.98 902.68,354.48 902.84,360.80 903.00,357.40 903.16,357.59 903.32,360.59 903.48,358.80 903.63,362.66 903.79,359.16 903.95,359.08 904.11,352.12 904.27,360.18 904.42,358.89 904.58,358.04 904.74,358.98 904.90,357.65 905.06,362.59 905.21,354.77 905.37,358.90 905.53,356.65 905.69,357.28 905.85,358.18 906.00,359.42 906.16,361.16 906.32,357.32 906.48,359.36 906.64,360.30 906.79,356.09 906.95,360.27 907.11,359.83 907.27,356.77 907.43,357.88 907.59,357.63 907.74,357.79 907.90,353.55 908.06,358.40 908.22,359.49 908.38,359.07 908.53,355.00 908.69,358.56 908.85,362.51 909.01,357.49 909.17,357.81 909.32,356.56 909.48,357.42 909.64,361.17 909.80,360.19 909.96,360.39 910.11,360.90 910.27,360.99 910.43,359.73 910.59,354.54 910.75,361.08 910.90,357.20 911.06,355.54 911.22,358.70 911.38,359.81 911.54,360.46 911.70,357.08 911.85,361.97 912.01,356.52 912.17,357.85 912.33,355.75 912.49,362.15 912.64,359.78 912.80,360.81 912.96,359.60 913.12,357.51 913.28,359.42 913.43,358.52 913.59,360.87 913.75,359.16 913.91,359.53 914.07,355.36 914.22,360.88 914.38,358.61 914.54,359.33 914.70,359.11 914.86,361.27 915.01,359.58 915.17,356.23 915.33,356.87 915.49,360.92 915.65,362.92 915.81,358.43 915.96,357.38 916.12,357.26 916.28,360.30 916.44,360.30 916.60,356.36 916.75,362.37 916.91,359.12 917.07,355.86 917.23,356.27 917.39,359.56 917.54,360.63 917.70,360.06 917.86,359.22 918.02,361.24 918.18,356.43 918.33,364.32 918.49,358.79 918.65,360.24 918.81,357.56 918.97,359.26 919.12,359.18 919.28,357.77 919.44,358.48 919.60,358.86 919.76,355.24 919.92,357.85 920.07,358.49 920.23,358.92 920.39,359.76 920.55,358.31 920.71,362.12 920.86,359.34 921.02,355.83 921.18,358.52 921.34,361.49 921.50,359.24 921.65,358.42 921.81,359.59 921.97,361.84 922.13,360.49 922.29,358.22 922.44,359.21 922.60,357.39 922.76,354.47 922.92,359.81 923.08,358.48 923.24,360.50 923.39,356.68 923.55,357.48 923.71,359.66 923.87,358.09 924.03,359.19 924.18,363.03 924.34,359.24 924.50,357.99 924.66,357.73 924.82,359.29 924.97,359.56 925.13,360.12 925.29,363.96 925.45,359.50 925.61,356.58 925.76,355.71 925.92,358.67 926.08,359.48 926.24,361.06 926.40,359.58 926.55,359.43 926.71,361.51 926.87,360.05 927.03,361.31 927.19,360.37 927.35,361.15 927.50,358.42 927.66,358.54 927.82,357.10 927.98,355.14 928.14,353.33 928.29,359.22 928.45,359.76 928.61,359.91 928.77,352.58 928.93,360.23 929.08,361.92 929.24,356.74 929.40,358.89 929.56,356.97 929.72,360.37 929.87,353.61 930.03,357.85 930.19,359.72 930.35,362.26 930.51,358.43 930.66,361.80 930.82,360.41 930.98,358.06 931.14,361.53 931.30,358.52 931.46,358.79 931.61,354.59 931.77,356.54 931.93,358.32 932.09,361.84 932.25,362.88 932.40,356.99 932.56,357.34 932.72,357.42 932.88,357.11 933.04,356.56 933.19,357.40 933.35,359.51 933.51,358.90 933.67,354.17 933.83,356.03 933.98,359.31 934.14,360.50 934.30,363.18 934.46,362.68 934.62,356.56 934.77,358.58 934.93,358.75 935.09,359.64 935.25,357.88 935.41,358.30 935.57,359.04 935.72,356.12 935.88,354.66 936.04,357.53 936.20,358.79 936.36,360.36 936.51,357.48 936.67,359.90 936.83,359.07 936.99,359.11 937.15,360.76 937.30,360.76 937.46,359.12 937.62,357.94 937.78,360.43 937.94,357.17 938.09,358.31 938.25,358.76 938.41,357.97 938.57,357.32 938.73,357.87 938.88,357.91 939.04,361.45 939.20,358.63 939.36,354.73 939.52,357.77 939.67,358.38 939.83,358.38 939.99,359.39 940.15,361.00 940.31,360.99 940.47,359.23 940.62,357.11 940.78,362.11 940.94,360.56 941.10,355.05 941.26,360.04 941.41,352.60 941.57,360.39 941.73,360.39 941.89,357.79 942.05,357.62 942.20,356.80 942.36,358.41 942.52,356.92 942.68,359.87 942.84,357.28 942.99,356.34 943.15,357.89 943.31,358.10 943.47,354.11 943.63,358.86 943.78,357.31 943.94,359.23 944.10,358.49 944.26,355.15 944.42,357.63 944.58,360.13 944.73,359.56 944.89,357.37 945.05,358.29 945.21,359.19 945.37,355.80 945.52,362.51 945.68,354.38 945.84,351.70 946.00,357.74 946.16,358.14 946.31,360.62 946.47,358.26 946.63,359.55 946.79,357.87 946.95,362.77 947.10,358.81 947.26,359.65 947.42,360.03 947.58,359.48 947.74,358.23 947.89,362.25 948.05,359.51 948.21,359.67 948.37,361.04 948.53,357.68 948.69,412.88 948.84,430.03 949.00,433.59 949.16,436.08 949.32,438.00 949.48,439.56 949.63,440.87 949.79,442.01 949.95,443.00 950.11,444.11 950.27,445.11 950.42,446.03 950.58,446.86 950.74,447.64 950.90,448.36 951.06,449.04 951.21,449.67 951.37,450.27 951.53,450.83 951.69,451.37 951.85,451.88 952.00,452.36 952.16,452.83 952.32,453.27 952.48,453.70 952.64,454.11 952.80,454.50 952.95,454.88 953.11,455.29 953.27,455.74 953.43,456.17 953.59,456.59 953.74,457.00 953.90,457.39 954.06,457.77 954.22,458.14 954.38,458.50 954.53,458.85 954.69,459.20 954.85,459.53 955.01,459.85 955.17,460.17 955.32,460.48 955.48,460.78 955.64,461.08 955.80,461.37 955.96,461.65 956.12,461.93 956.27,462.20 956.43,462.46 956.59,462.72 956.75,462.98 956.91,463.23 957.06,463.48 957.22,463.72 957.38,463.95 957.54,464.19 957.70,464.43 957.85,464.67 958.01,464.90 958.17,465.13 958.33,465.35 958.49,465.57 958.64,465.79 958.80,466.00 958.96,466.22 959.12,466.42 959.28,466.63 959.43,466.83 959.59,467.03 959.75,467.22 959.91,467.42 960.07,467.61 960.23,467.80 960.38,468.00 960.54,468.20 960.70,468.39 960.86,468.59 961.02,468.78 961.17,468.97 961.33,469.16 961.49,469.34 961.65,469.53 961.81,469.71 961.96,469.88 962.12,470.06 962.28,470.23 962.44,470.41 962.60,470.58 962.75,470.75 962.91,470.91 963.07,471.08 963.23,471.21 963.39,471.31 963.54,471.41 963.70,471.52 963.86,471.62 964.02,471.72 964.18,471.82 964.34,471.91 964.49,472.01 964.65,472.11 964.81,472.20 964.97,472.30 965.13,472.39 965.28,472.48 965.44,472.57 965.60,472.66 965.76,472.75 965.92,472.84 966.07,472.93 966.23,473.02 966.39,473.10 966.55,473.19 966.71,473.28 966.86,473.36 967.02,473.44 967.18,473.53 967.34,473.61 967.50,473.69 967.65,473.77 967.81,473.85 967.97,473.93 968.13,474.01 968.29,474.09 968.44,474.17 968.60,474.24 968.76,474.32 968.92,474.39 969.08,474.47 969.24,474.50 969.39,474.50 969.55,474.50 969.71,474.50 969.87,474.50 970.03,474.50 970.18,474.50 970.34,474.50 970.50,474.50" fill="none" stroke="#f2ec22" stroke-width="1.5"/>
</svg>
<div style="position:absolute;left:727px;top:520px;width:258px;height:16px;background:#f0f0f0;border-top:1px solid #cfcfcf;box-sizing:border-box"></div>
<div class="t" style="left:733px;top:524px;font-size:9.5px;color:#333">Stopped</div>
<div class="t" style="left:795px;top:524px;font-size:9.5px;color:#333;letter-spacing:-0.25px">VBW = 1.06103 kHz &nbsp;RBW = 60.0000 kHz &nbsp;Sam</div>
<div style="position:absolute;left:0px;top:536px;width:985px;height:18px;background:#e5e5e5;border-top:1px solid #c8c8c8;box-sizing:border-box"></div>
<div class="t" style="left:6px;top:541px;font-size:10px;color:#333;letter-spacing:-0.45px">Completed generation of Downlink waveform.</div>
<div style="position:absolute;left:891px;top:544px;width:91px;height:4px;background:#1f86db"></div>
</body></html>
